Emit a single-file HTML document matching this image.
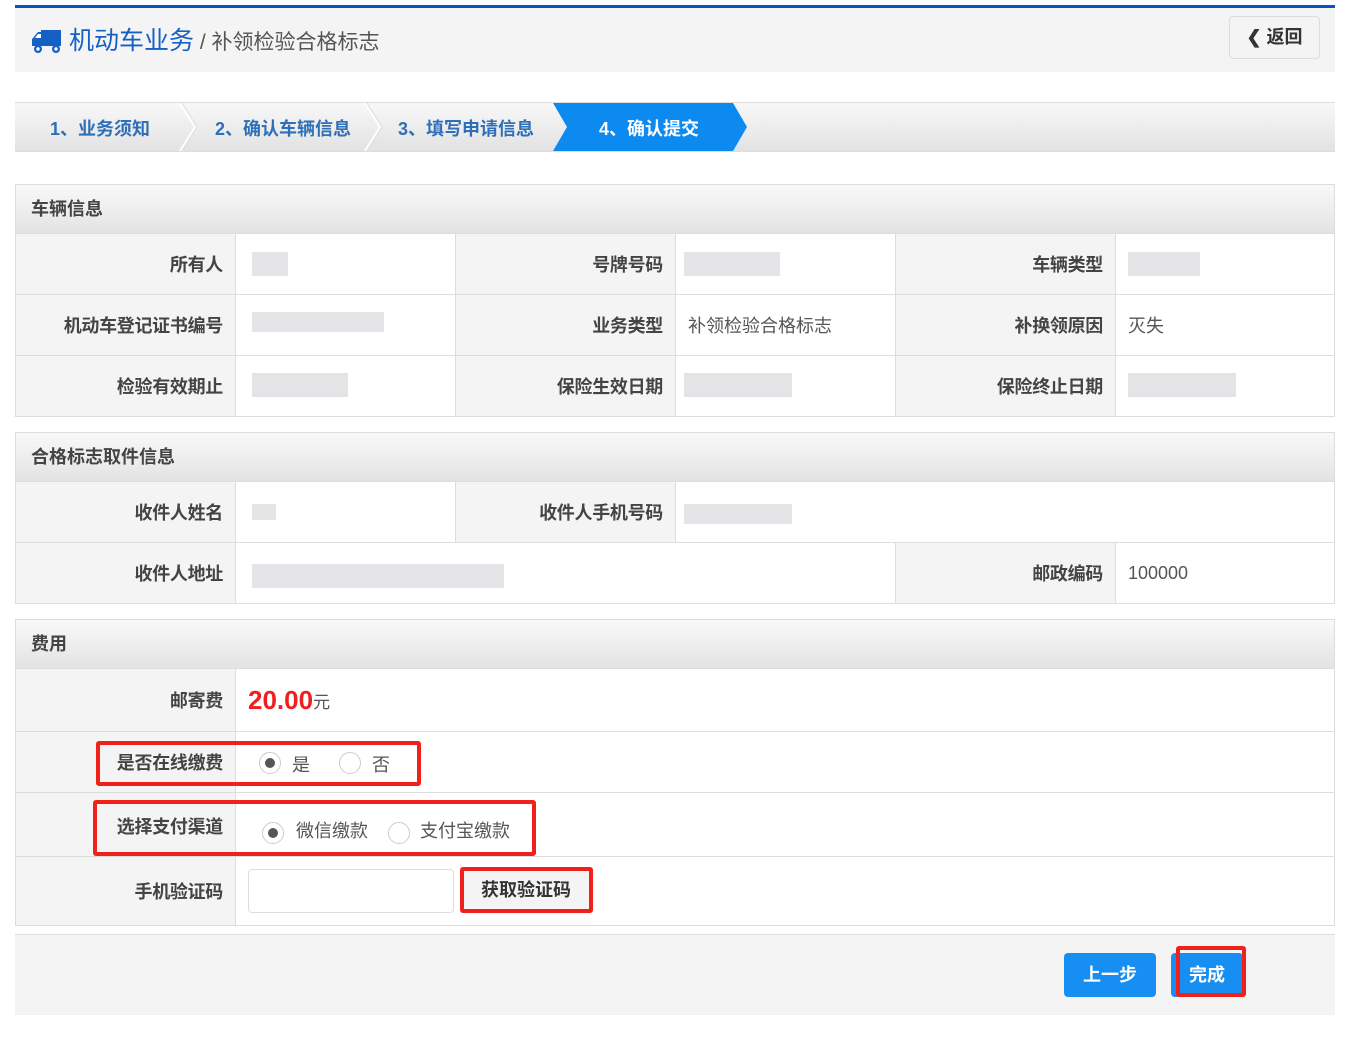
<!DOCTYPE html>
<html><head><meta charset="utf-8">
<style>
*{margin:0;padding:0;box-sizing:border-box}
body{width:1357px;height:1045px;background:#fff;position:relative;overflow:hidden;font-family:"Liberation Sans","Noto Sans CJK SC",sans-serif;color:#555}
.a{position:absolute}
.lbl{position:absolute;background:#f4f4f4;border-right:1px solid #ddd;border-bottom:1px solid #ddd;font-weight:bold;font-size:18px;color:#444;text-align:right;padding-right:12px;display:flex;align-items:center;justify-content:flex-end;letter-spacing:-0.3px}
.val{position:absolute;background:#fff;border-right:1px solid #ddd;border-bottom:1px solid #ddd;font-size:18px;color:#555;padding-left:12px;display:flex;align-items:center}
.sh{position:absolute;left:15px;width:1320px;height:50px;border:1px solid #ddd;background:linear-gradient(#f9f9f9,#e3e3e3);font-weight:bold;font-size:18px;color:#444;padding-left:15px;line-height:48px}
.blur{position:absolute;background:#e4e4e6}
.radio{position:absolute;width:22px;height:22px;border:1px solid #ccc;border-radius:50%;background:#fff}
.radio.on::after{content:"";position:absolute;left:5px;top:5px;width:10px;height:10px;border-radius:50%;background:#555}
.red{position:absolute;border:4px solid #f0201a;border-radius:3px}
.step{position:absolute;top:104px;height:50px;font-weight:bold;font-size:18px;color:#2e6fb8;line-height:50px}
</style></head><body>
<div class="a" style="left:15px;top:5px;width:1320px;height:3px;background:#0a52c4"></div>
<div class="a" style="left:15px;top:8px;width:1320px;height:64px;background:#f4f4f4"></div>
<svg class="a" style="left:31px;top:28px" width="32" height="26" viewBox="0 0 32 26"><path d="M10 2h20v16H10z M2 10l5-6h5v14H1v-7z" fill="#1560c4"/><path d="M4 10l3-4h3v4z" fill="#fff"/><circle cx="7" cy="21" r="4" fill="#1560c4"/><circle cx="7" cy="21" r="1.7" fill="#fff"/><circle cx="25" cy="21" r="4" fill="#1560c4"/><circle cx="25" cy="21" r="1.7" fill="#fff"/></svg>
<div class="a" style="left:69px;top:25px;font-size:25px;color:#1560c4;line-height:32px">机动车业务<span style="color:#555;font-size:21px"> / 补领检验合格标志</span></div>
<div class="a" style="left:1229px;top:16px;width:91px;height:43px;border:1px solid #ddd;border-radius:4px;background:#f4f4f4;font-weight:bold;font-size:18px;color:#333;line-height:41px;text-align:center">&#10094; 返回</div>

<div class="a" style="left:15px;top:102px;width:1320px;height:50px;border-top:1px solid #ddd;border-bottom:1px solid #ddd;background:linear-gradient(#f8f8f8,#e2e2e2)"></div>
<svg class="a" style="left:175px;top:103px" width="400" height="48"><path d="M5 0l15 24-15 24M190 0l15 24-15 24" stroke="#fff" stroke-width="2" fill="none"/><path d="M7 0l15 24-15 24M192 0l15 24-15 24" stroke="#ddd" stroke-width="1" fill="none"/></svg>
<svg class="a" style="left:553px;top:103px" width="195" height="48"><path d="M0 0h180l14 24-14 24H0l14-24z" fill="#0c8af0"/></svg>
<div class="step" style="left:50px">1、业务须知</div>
<div class="step" style="left:215px">2、确认车辆信息</div>
<div class="step" style="left:398px">3、填写申请信息</div>
<div class="step" style="left:599px;color:#fff">4、确认提交</div>

<div class="sh" style="top:184px">车辆信息</div>
<div class="a" style="left:15px;top:234px;width:1320px;height:183px;border-left:1px solid #ddd"></div>
<div class="lbl" style="left:16px;top:234px;width:220px;height:61px">所有人</div>
<div class="val" style="left:236px;top:234px;width:220px;height:61px"></div>
<div class="lbl" style="left:456px;top:234px;width:220px;height:61px">号牌号码</div>
<div class="val" style="left:676px;top:234px;width:220px;height:61px"></div>
<div class="lbl" style="left:896px;top:234px;width:220px;height:61px">车辆类型</div>
<div class="val" style="left:1116px;top:234px;width:219px;height:61px"></div>
<div class="lbl" style="left:16px;top:295px;width:220px;height:61px">机动车登记证书编号</div>
<div class="val" style="left:236px;top:295px;width:220px;height:61px"></div>
<div class="lbl" style="left:456px;top:295px;width:220px;height:61px">业务类型</div>
<div class="val" style="left:676px;top:295px;width:220px;height:61px">补领检验合格标志</div>
<div class="lbl" style="left:896px;top:295px;width:220px;height:61px">补换领原因</div>
<div class="val" style="left:1116px;top:295px;width:219px;height:61px">灭失</div>
<div class="lbl" style="left:16px;top:356px;width:220px;height:61px">检验有效期止</div>
<div class="val" style="left:236px;top:356px;width:220px;height:61px"></div>
<div class="lbl" style="left:456px;top:356px;width:220px;height:61px">保险生效日期</div>
<div class="val" style="left:676px;top:356px;width:220px;height:61px"></div>
<div class="lbl" style="left:896px;top:356px;width:220px;height:61px">保险终止日期</div>
<div class="val" style="left:1116px;top:356px;width:219px;height:61px"></div>
<div class="blur" style="left:252px;top:252px;width:36px;height:24px"></div>
<div class="blur" style="left:684px;top:252px;width:96px;height:24px"></div>
<div class="blur" style="left:1128px;top:252px;width:72px;height:24px"></div>
<div class="blur" style="left:252px;top:312px;width:132px;height:20px"></div>
<div class="blur" style="left:252px;top:373px;width:96px;height:24px"></div>
<div class="blur" style="left:684px;top:373px;width:108px;height:24px"></div>
<div class="blur" style="left:1128px;top:373px;width:108px;height:24px"></div>

<div class="sh" style="top:432px">合格标志取件信息</div>
<div class="a" style="left:15px;top:482px;width:1320px;height:122px;border-left:1px solid #ddd"></div>
<div class="lbl" style="left:16px;top:482px;width:220px;height:61px">收件人姓名</div>
<div class="val" style="left:236px;top:482px;width:220px;height:61px"></div>
<div class="lbl" style="left:456px;top:482px;width:220px;height:61px">收件人手机号码</div>
<div class="val" style="left:676px;top:482px;width:659px;height:61px"></div>
<div class="lbl" style="left:16px;top:543px;width:220px;height:61px">收件人地址</div>
<div class="val" style="left:236px;top:543px;width:660px;height:61px"></div>
<div class="lbl" style="left:896px;top:543px;width:220px;height:61px">邮政编码</div>
<div class="val" style="left:1116px;top:543px;width:219px;height:61px">100000</div>
<div class="blur" style="left:252px;top:504px;width:24px;height:16px"></div>
<div class="blur" style="left:684px;top:504px;width:108px;height:20px"></div>
<div class="blur" style="left:252px;top:564px;width:252px;height:24px"></div>

<div class="sh" style="top:619px">费用</div>
<div class="a" style="left:15px;top:669px;width:1320px;height:257px;border-left:1px solid #ddd"></div>
<div class="lbl" style="left:16px;top:669px;width:220px;height:63px">邮寄费</div>
<div class="val" style="left:236px;top:669px;width:1099px;height:63px"><span style="color:#f01e1e;font-size:26px;font-weight:bold">20.00</span><span style="font-size:17px">元</span></div>
<div class="lbl" style="left:16px;top:732px;width:220px;height:61px">是否在线缴费</div>
<div class="val" style="left:236px;top:732px;width:1099px;height:61px"></div>
<div class="lbl" style="left:16px;top:793px;width:220px;height:64px;align-items:flex-start;padding-top:20px">选择支付渠道</div>
<div class="val" style="left:236px;top:793px;width:1099px;height:64px"></div>
<div class="lbl" style="left:16px;top:857px;width:220px;height:69px">手机验证码</div>
<div class="val" style="left:236px;top:857px;width:1099px;height:69px"></div>
<div class="radio on" style="left:259px;top:752px"></div><div class="a" style="left:292px;top:751px;font-size:18px">是</div>
<div class="radio" style="left:339px;top:752px"></div><div class="a" style="left:372px;top:751px;font-size:18px">否</div>
<div class="radio on" style="left:262px;top:822px"></div><div class="a" style="left:296px;top:817px;font-size:18px">微信缴款</div>
<div class="radio" style="left:388px;top:822px"></div><div class="a" style="left:420px;top:817px;font-size:18px">支付宝缴款</div>
<div class="a" style="left:248px;top:869px;width:206px;height:44px;border:1px solid #ddd;border-radius:4px;background:#fff"></div>
<div class="a" style="left:462px;top:869px;width:128px;height:43px;background:#f4f4f4;font-weight:bold;font-size:18px;color:#333;line-height:43px;text-align:center">获取验证码</div>
<div class="red" style="left:96px;top:741px;width:325px;height:45px"></div>
<div class="red" style="left:93px;top:800px;width:443px;height:56px"></div>
<div class="red" style="left:460px;top:867px;width:133px;height:46px"></div>

<div class="a" style="left:15px;top:934px;width:1320px;height:81px;background:#f4f4f4;border-top:1px solid #ddd"></div>
<div class="a" style="left:1064px;top:953px;width:92px;height:44px;background:#168ef2;border-radius:4px;color:#fff;font-weight:bold;font-size:18px;line-height:44px;text-align:center">上一步</div>
<div class="a" style="left:1171px;top:953px;width:72px;height:44px;background:#168ef2;border-radius:4px;color:#fff;font-weight:bold;font-size:18px;line-height:44px;text-align:center">完成</div>
<div class="red" style="left:1176px;top:946px;width:70px;height:51px"></div>
</body></html>
